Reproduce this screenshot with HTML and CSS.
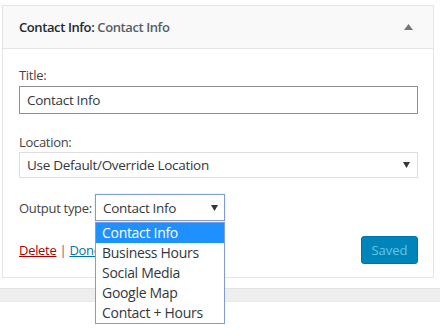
FILE: index.html
```html
<!DOCTYPE html>
<html lang="en">
<head>
    <meta charset="UTF-8">
    <title>Contact Info widget</title>
    <link rel="stylesheet" href="styles.css">
</head>
<body>

    <div class="widget">
        <div class="widget-top">
            <h3 class="widget-title">Contact Info: <span class="in-title">Contact Info</span></h3>
            <svg class="toggle" width="9" height="6" viewBox="0 0 9 6"><path d="M0 6 L4.5 0 L9 6 Z" fill="#72777c"/></svg>
        </div>

        <div class="widget-inside">
            <p class="field-label">Title:</p>
            <div class="text-input">Contact Info</div>

            <p class="field-label">Location:</p>
            <div class="select wide">
                <span>Use Default/Override Location</span>
                <svg width="7" height="6" viewBox="0 0 7 6"><path d="M0 0 L7 0 L3.5 6 Z" fill="#32373c"/></svg>
            </div>

            <div class="output-row">
                <span class="output-label">Output type:</span>
                <div class="select small focused">
                    <span>Contact Info</span>
                    <svg width="7" height="6" viewBox="0 0 7 6"><path d="M0 0 L7 0 L3.5 6 Z" fill="#32373c"/></svg>

                    <ul class="options">
                        <li class="selected">Contact Info</li>
                        <li>Business Hours</li>
                        <li>Social Media</li>
                        <li>Google Map</li>
                        <li>Contact + Hours</li>
                    </ul>
                </div>
            </div>

            <div class="actions">
                <div class="links">
                    <a href="#" class="delete">Delete</a> | <a href="#" class="done">Done</a>
                </div>
                <button class="saved" disabled>Saved</button>
            </div>
        </div>
    </div>

    <div class="next-widget"></div>

</body>
</html>
```

FILE: styles.css
```css
/* Общие стили */
html, body {
    min-height: 330px;
}

body {
    margin: 0;
    background: #fff;
    font-family: 'Open Sans', 'Noto Sans', sans-serif;
    font-size: 13px;
    letter-spacing: -0.3px;
    color: #32373c;
}

.widget {
    margin: 5px 6px 0 2px;
    border: 1px solid #e5e5e5;
    background: #fff;
}

/* Шапка виджета */
.widget-top {
    height: 42px;
    padding: 0 20px 0 16px;
    background: #f9f9f9;
    border-bottom: 1px solid #e5e5e5;
    display: flex;
    align-items: center;
    justify-content: space-between;
}

.widget-title {
    margin: 0;
    font-size: 13px;
    font-weight: 600;
    letter-spacing: -0.4px;
    color: #23282d;
}

.in-title {
    color: #555d66;
}

/* Тело виджета */
.widget-inside {
    padding: 16px 15px 13px 16px;
}

.field-label {
    margin: 0;
    line-height: 20px;
    color: #444;
}

.text-input {
    margin-top: 1px;
    height: 26px;
    line-height: 26px;
    padding: 0 7px;
    border: 1px solid #8c8f94;
    font-size: 13.5px;
    color: #32373c;
}

.text-input + .field-label {
    margin-top: 18px;
}

.select {
    position: relative;
    display: flex;
    align-items: center;
    justify-content: space-between;
    border: 1px solid #ddd;
    background: #fff;
    font-size: 13.5px;
    color: #32373c;
    box-sizing: border-box;
}

.select.wide {
    height: 26px;
    padding: 0 7px;
}

.select.small {
    width: 130px;
    height: 27px;
    padding: 0 6px 0 7px;
}

.select.focused {
    border-color: #7e9cd6;
    box-shadow: 0 0 1px #a9c3ee;
}

.output-row {
    margin-top: 16px;
    display: flex;
    align-items: center;
}

.output-label {
    width: 76px;
    color: #444;
}

/* Выпадающий список */
.options {
    position: absolute;
    top: 27px;
    left: -1px;
    width: 130px;
    margin: 0;
    padding: 0;
    list-style: none;
    border: 1px solid #7e9cd6;
    background: #fff;
    box-sizing: border-box;
    z-index: 2;
}

.options li {
    height: 20px;
    line-height: 20px;
    padding: 0 6px;
    font-size: 14px;
    color: #32373c;
}

.options li.selected {
    background: #1e90ff;
    color: #fff;
}

/* Ссылки и кнопка */
.actions {
    margin-top: 15px;
    display: flex;
    align-items: center;
    justify-content: space-between;
}

.links {
    color: #666;
}

.delete {
    color: #a00;
}

.done {
    color: #0073aa;
}

.saved {
    width: 57px;
    height: 28px;
    padding: 0;
    border: 1px solid #0073aa;
    border-radius: 3px;
    background: #0085ba;
    color: #66c6e4;
    font-family: inherit;
    font-size: 13px;
}

.next-widget {
    margin-top: 10px;
    height: 12px;
    background: #eee;
    border-top: 1px solid #e2e2e2;
    border-bottom: 1px solid #e8e8e8;
}
```
